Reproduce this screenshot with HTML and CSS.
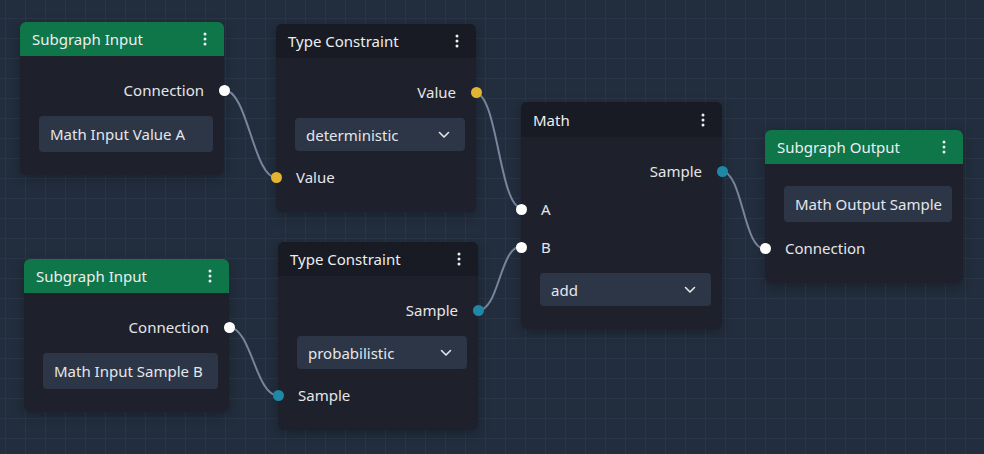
FILE: index.html
```html
<!DOCTYPE html>
<html lang="en">
<head>
    <meta charset="UTF-8">
    <title>Subgraph Editor</title>
    <link rel="stylesheet" href="styles.css">
</head>
<body>
    <div class="canvas">
        <!-- wires sit under the nodes -->
        <svg class="wires" width="984" height="454" viewBox="0 0 984 454">
            <path d="M224 90 C248 90, 253 178, 277 178" />
            <path d="M228 327 C252 327, 255 396, 279 396" />
            <path d="M475 93 C498 93, 499 208, 522 208" />
            <path d="M477 311 C500 311, 499 246, 522 246" />
            <path d="M721 171 C743 171, 743 249, 765 249" />
        </svg>

        <div class="node node-io" style="left: 20px; top: 22px; width: 204px;">
            <div class="node-header">
                <span class="node-title">Subgraph Input</span>
                <svg class="node-menu" width="4" height="16" viewBox="0 0 4 16"><circle cx="2" cy="3" r="1.5"/><circle cx="2" cy="8" r="1.5"/><circle cx="2" cy="13" r="1.5"/></svg>
            </div>
            <div class="node-body">
                <div class="port-row out">Connection<span class="port white"></span></div>
                <div class="widget"><div class="field">Math Input Value A</div></div>
            </div>
        </div>

        <div class="node" style="left: 276px; top: 24px; width: 200px;">
            <div class="node-header">
                <span class="node-title">Type Constraint</span>
                <svg class="node-menu" width="4" height="16" viewBox="0 0 4 16"><circle cx="2" cy="3" r="1.5"/><circle cx="2" cy="8" r="1.5"/><circle cx="2" cy="13" r="1.5"/></svg>
            </div>
            <div class="node-body">
                <div class="port-row out">Value<span class="port yellow"></span></div>
                <div class="widget">
                    <div class="select">deterministic
                        <svg width="12" height="8" viewBox="0 0 12 8"><path d="M1.5 1.5 L6 6 L10.5 1.5" /></svg>
                    </div>
                </div>
                <div class="port-row in"><span class="port yellow"></span>Value</div>
            </div>
        </div>

        <div class="node" style="left: 521px; top: 102px; width: 201px;">
            <div class="node-header tall">
                <span class="node-title">Math</span>
                <svg class="node-menu" width="4" height="16" viewBox="0 0 4 16"><circle cx="2" cy="3" r="1.5"/><circle cx="2" cy="8" r="1.5"/><circle cx="2" cy="13" r="1.5"/></svg>
            </div>
            <div class="node-body">
                <div class="port-row out">Sample<span class="port teal"></span></div>
                <div class="port-row in"><span class="port white"></span>A</div>
                <div class="port-row in"><span class="port white"></span>B</div>
                <div class="widget">
                    <div class="select">add
                        <svg width="12" height="8" viewBox="0 0 12 8"><path d="M1.5 1.5 L6 6 L10.5 1.5" /></svg>
                    </div>
                </div>
            </div>
        </div>

        <div class="node node-io" style="left: 765px; top: 130px; width: 198px;">
            <div class="node-header">
                <span class="node-title">Subgraph Output</span>
                <svg class="node-menu" width="4" height="16" viewBox="0 0 4 16"><circle cx="2" cy="3" r="1.5"/><circle cx="2" cy="8" r="1.5"/><circle cx="2" cy="13" r="1.5"/></svg>
            </div>
            <div class="node-body">
                <div class="widget"><div class="field">Math Output Sample</div></div>
                <div class="port-row in"><span class="port white"></span>Connection</div>
            </div>
        </div>

        <div class="node node-io" style="left: 24px; top: 259px; width: 205px;">
            <div class="node-header">
                <span class="node-title">Subgraph Input</span>
                <svg class="node-menu" width="4" height="16" viewBox="0 0 4 16"><circle cx="2" cy="3" r="1.5"/><circle cx="2" cy="8" r="1.5"/><circle cx="2" cy="13" r="1.5"/></svg>
            </div>
            <div class="node-body">
                <div class="port-row out">Connection<span class="port white"></span></div>
                <div class="widget"><div class="field">Math Input Sample B</div></div>
            </div>
        </div>

        <div class="node" style="left: 278px; top: 242px; width: 200px;">
            <div class="node-header">
                <span class="node-title">Type Constraint</span>
                <svg class="node-menu" width="4" height="16" viewBox="0 0 4 16"><circle cx="2" cy="3" r="1.5"/><circle cx="2" cy="8" r="1.5"/><circle cx="2" cy="13" r="1.5"/></svg>
            </div>
            <div class="node-body">
                <div class="port-row out">Sample<span class="port teal"></span></div>
                <div class="widget">
                    <div class="select">probabilistic
                        <svg width="12" height="8" viewBox="0 0 12 8"><path d="M1.5 1.5 L6 6 L10.5 1.5" /></svg>
                    </div>
                </div>
                <div class="port-row in"><span class="port teal"></span>Sample</div>
            </div>
        </div>
    </div>
</body>
</html>
```

FILE: styles.css
```css
:root {
    --canvas: #222d3d;
    --grid: #2a3647;
    --node: #1e212b;
    --header: #181b23;
    --green: #0f7649;
    --field: #2d3646;
    --text: #e4e6ea;
    --wire: #78869c;
    --yellow: #e3b431;
    --teal: #1f88a6;
}

* {
    margin: 0;
    padding: 0;
    box-sizing: border-box;
}

body {
    font-family: 'Noto Sans', 'Open Sans', sans-serif;
    font-size: 15px;
    color: var(--text);
    background: var(--canvas);
    overflow: hidden;
}

/* Free canvas with a 20px grid */
.canvas {
    position: relative;
    width: 984px;
    height: 454px;
    background-color: var(--canvas);
    background-image:
        linear-gradient(to right, var(--grid) 1px, transparent 1px),
        linear-gradient(to bottom, var(--grid) 1px, transparent 1px);
    background-size: 20px 20px;
    background-position: 5px 18px;
}

.wires {
    position: absolute;
    left: 0;
    top: 0;
}

.wires path {
    fill: none;
    stroke: var(--wire);
    stroke-width: 2;
}

/* Nodes */
.node {
    position: absolute;
    background: var(--node);
    border-radius: 6px;
    box-shadow: 0 4px 12px rgba(0, 0, 0, 0.25);
}

.node-header {
    height: 34px;
    display: flex;
    align-items: center;
    justify-content: space-between;
    padding: 0 17px 0 12px;
    background: var(--header);
    border-radius: 6px 6px 0 0;
}

.node-header.tall {
    height: 35px;
}

.node-io .node-header {
    background: var(--green);
}

.node-title {
    color: #eceef1;
}

.node-menu circle {
    fill: #eceef1;
}

.node-body {
    display: flex;
    flex-direction: column;
    padding: 15px 0 16px;
}

.port-row {
    position: relative;
    height: 38px;
    display: flex;
    align-items: center;
    padding: 0 20px;
}

.port-row.out {
    justify-content: flex-end;
}

.port {
    position: absolute;
    top: 50%;
    width: 11px;
    height: 11px;
    margin-top: -5.5px;
    border-radius: 50%;
}

.port-row.out .port {
    right: -5.5px;
}

.port-row.in .port {
    left: -5.5px;
}

.port.white { background: #ffffff; }
.port.yellow { background: var(--yellow); }
.port.teal { background: var(--teal); }

/* Widgets */
.widget {
    padding: 7px 11px 7px 19px;
}

.field {
    height: 36px;
    display: flex;
    align-items: center;
    padding: 0 11px;
    background: var(--field);
    border-radius: 4px;
    white-space: nowrap;
}

.select {
    height: 33px;
    display: flex;
    align-items: center;
    justify-content: space-between;
    padding: 0 15px 0 11px;
    background: var(--field);
    border-radius: 4px;
}

.select path {
    fill: none;
    stroke: #e4e6ea;
    stroke-width: 1.6;
    stroke-linecap: round;
    stroke-linejoin: round;
}
```
